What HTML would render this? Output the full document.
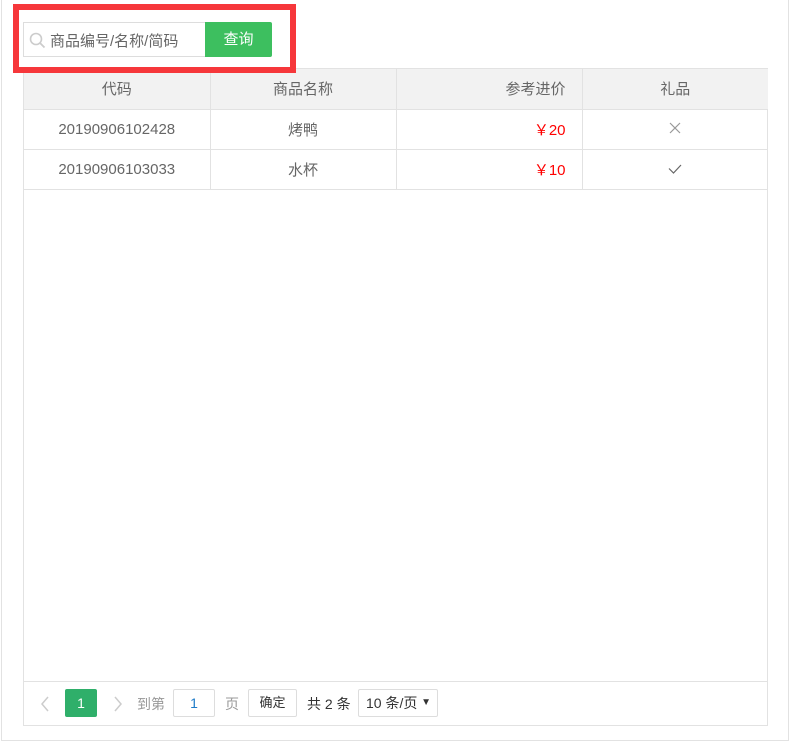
<!DOCTYPE html>
<html><head><meta charset="utf-8"><style>
*{box-sizing:border-box;margin:0;padding:0}
body{width:790px;height:742px;background:#fff;font-family:"Liberation Sans","Noto Sans CJK SC",sans-serif;font-size:15px;color:#666;position:relative;overflow:hidden}
.page{position:absolute;left:1px;top:0;width:788px;height:741px;border:1px solid #e2e2e2;border-top:none}
.red{position:absolute;left:13px;top:4px;width:283px;height:69px;border:6px solid #f6373b;z-index:5}
.inp{position:absolute;left:23px;top:22px;width:183px;height:35px;border:1px solid #ddd;border-right:none;background:#fff}
.inp span{position:absolute;left:26px;top:7px;color:#666;font-size:15px}
.btn{position:absolute;left:205px;top:22px;width:67px;height:35px;background:#3dbf5f;color:#fff;text-align:center;line-height:35px;border-radius:0 2px 2px 0}
.tbl{position:absolute;left:23px;top:68px;width:745px;height:658px;border:1px solid #e2e2e2}
table{border-collapse:collapse;width:744px;table-layout:fixed}
td,th{height:40px;border-right:1px solid #e2e2e2;border-bottom:1px solid #e2e2e2;font-weight:normal;text-align:center;color:#666}
th{background:#f2f2f2}
td:last-child,th:last-child{border-right:none}
.r{text-align:right;padding-right:16px}
.red-t{color:#f00}
.pg{position:absolute;left:0;top:612px;width:743px;height:45px;border-top:1px solid #e2e2e2}
.pg *{position:absolute}
.box{border:1px solid #ddd;border-radius:2px;height:28px;top:7px;line-height:26px;text-align:center;color:#333;font-size:13px}
</style></head><body>
<div class="page"></div>
<div class="inp"><svg style="position:absolute;left:5px;top:9px" width="17" height="17" viewBox="0 0 17 17"><circle cx="7" cy="7" r="5.5" fill="none" stroke="#ccc" stroke-width="1.6"/><path d="M11 11l4.5 4.5" stroke="#ccc" stroke-width="1.8"/></svg><span>商品编号/名称/简码</span></div>
<div class="btn">查询</div>
<div class="red"></div>
<div class="tbl">
<table>
<tr><th>代码</th><th>商品名称</th><th class="r">参考进价</th><th>礼品</th></tr>
<tr><td>20190906102428</td><td>烤鸭</td><td class="r red-t">￥20</td><td><svg width="12" height="12" viewBox="0 0 12 12"><path d="M1 1l10 10M11 1L1 11" stroke="#999" stroke-width="1.2"/></svg></td></tr>
<tr><td>20190906103033</td><td>水杯</td><td class="r red-t">￥10</td><td><svg width="14" height="10" viewBox="0 0 14 10"><path d="M1 4.5l4.5 4.5L13 1" fill="none" stroke="#666" stroke-width="1.2"/></svg></td></tr>
</table>
<div class="pg">
<svg style="left:16px;top:14px" width="10" height="16" viewBox="0 0 10 16"><path d="M8 1L2 8l6 7" fill="none" stroke="#ccc" stroke-width="1.5"/></svg>
<div style="left:41px;top:7px;width:32px;height:28px;background:#2faf6a;color:#fff;border-radius:2px;text-align:center;line-height:28px;font-size:14px">1</div>
<svg style="left:89px;top:14px" width="10" height="16" viewBox="0 0 10 16"><path d="M2 1l6 7-6 7" fill="none" stroke="#ccc" stroke-width="1.5"/></svg>
<span style="left:113px;top:12px;color:#999;font-size:14px">到第</span>
<div class="box" style="left:149px;width:42px;color:#1e7bc8;font-size:14px">1</div>
<span style="left:201px;top:12px;color:#999;font-size:14px">页</span>
<div class="box" style="left:224px;width:49px">确定</div>
<span style="left:283px;top:12px;color:#333;font-size:14px">共 2 条</span>
<div class="box" style="left:334px;width:80px;text-align:left;padding-left:7px;font-size:14px">10 条/页<span style="position:absolute;right:6px;top:0;font-size:10px">▼</span></div>
</div>
</div>
</body></html>
